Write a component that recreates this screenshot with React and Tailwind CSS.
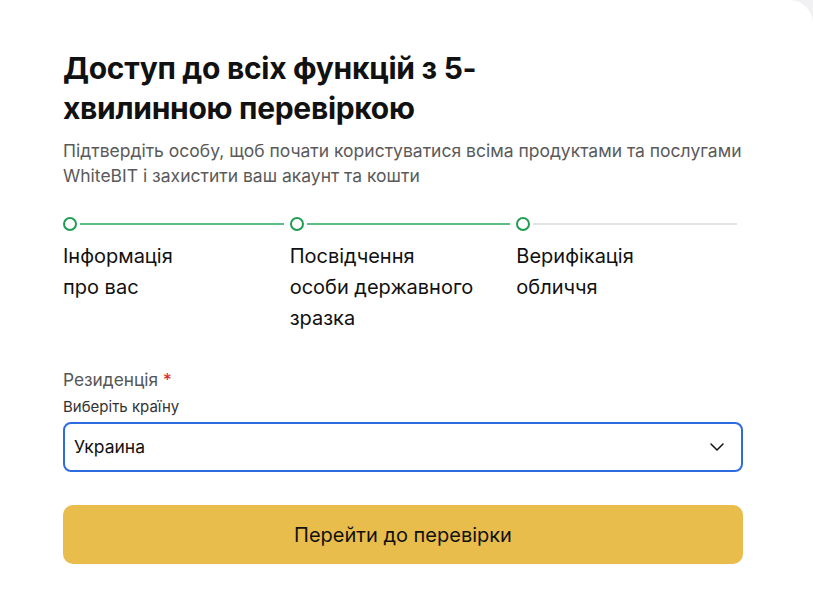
import React from 'react'

const steps = [
  { label: ['Інформація', 'про вас'], done: true, line: 'green' },
  { label: ['Посвідчення', 'особи державного', 'зразка'], done: true, line: 'green' },
  { label: ['Верифікація', 'обличчя'], done: true, line: 'gray' },
]

function Chevron() {
  return (
    <svg width="18" height="18" viewBox="0 0 24 24" fill="none" stroke="#111" strokeWidth="2" strokeLinecap="round" strokeLinejoin="round">
      <path d="M4 8l8 8 8-8" />
    </svg>
  )
}

export default function App() {
  return (
    <div className="min-h-screen bg-[#f1f1f4] font-['Inter',sans-serif]">
      <div className="min-h-[610px] bg-white rounded-tr-[24px] pl-[63px] pr-[70px] pt-[48px]">

        {/* Heading */}
        <h1 className="max-w-[480px] text-[30px] leading-[40px] font-bold text-[#111] tracking-[-0.3px]">
          Доступ до всіх функцій з 5-хвилинною перевіркою
        </h1>
        <p className="mt-[10px] text-[17.5px] leading-[25px] text-[#5a5a5a]">
          Підтвердіть особу, щоб почати користуватися всіма продуктами та послугами WhiteBIT і захистити ваш акаунт та кошти
        </p>

        {/* Stepper */}
        <div className="mt-[29px] grid grid-cols-3">
          {steps.map((s, i) => (
            <div key={i}>
              <div className="flex items-center h-[14px]">
                <div className="w-[14px] h-[14px] rounded-full border-[2.5px] border-[#1f9d55] flex-shrink-0" />
                <div className={`ml-[3px] mr-[6px] flex-1 h-[2px] ${s.line === 'green' ? 'bg-[#5cbf86]' : 'bg-[#e3e3e3]'}`} />
              </div>
              <div className="mt-[10px] text-[20px] leading-[31px] text-[#111]">
                {s.label.map((l, j) => (
                  <div key={j}>{l}</div>
                ))}
              </div>
            </div>
          ))}
        </div>

        {/* Residence */}
        <div className="mt-[34px]">
          <div className="text-[17.3px] leading-[24px] text-[#555]">
            Резиденція <span className="text-[#e02424]">*</span>
          </div>
          <div className="mt-[5px] text-[15px] leading-[20px] text-[#333]">Виберіть країну</div>
          <button className="mt-[5px] w-full h-[50px] flex items-center justify-between pl-[9px] pr-[15px] border-2 border-[#2f6be0] rounded-[8px] text-[17.5px] text-[#111]">
            <span>Украина</span>
            <Chevron />
          </button>
        </div>

        {/* Submit */}
        <button className="mt-[33px] w-full h-[59px] rounded-[10px] bg-[#e8bd4b] text-[20px] text-[#111]">
          Перейти до перевірки
        </button>
      </div>
    </div>
  )
}
